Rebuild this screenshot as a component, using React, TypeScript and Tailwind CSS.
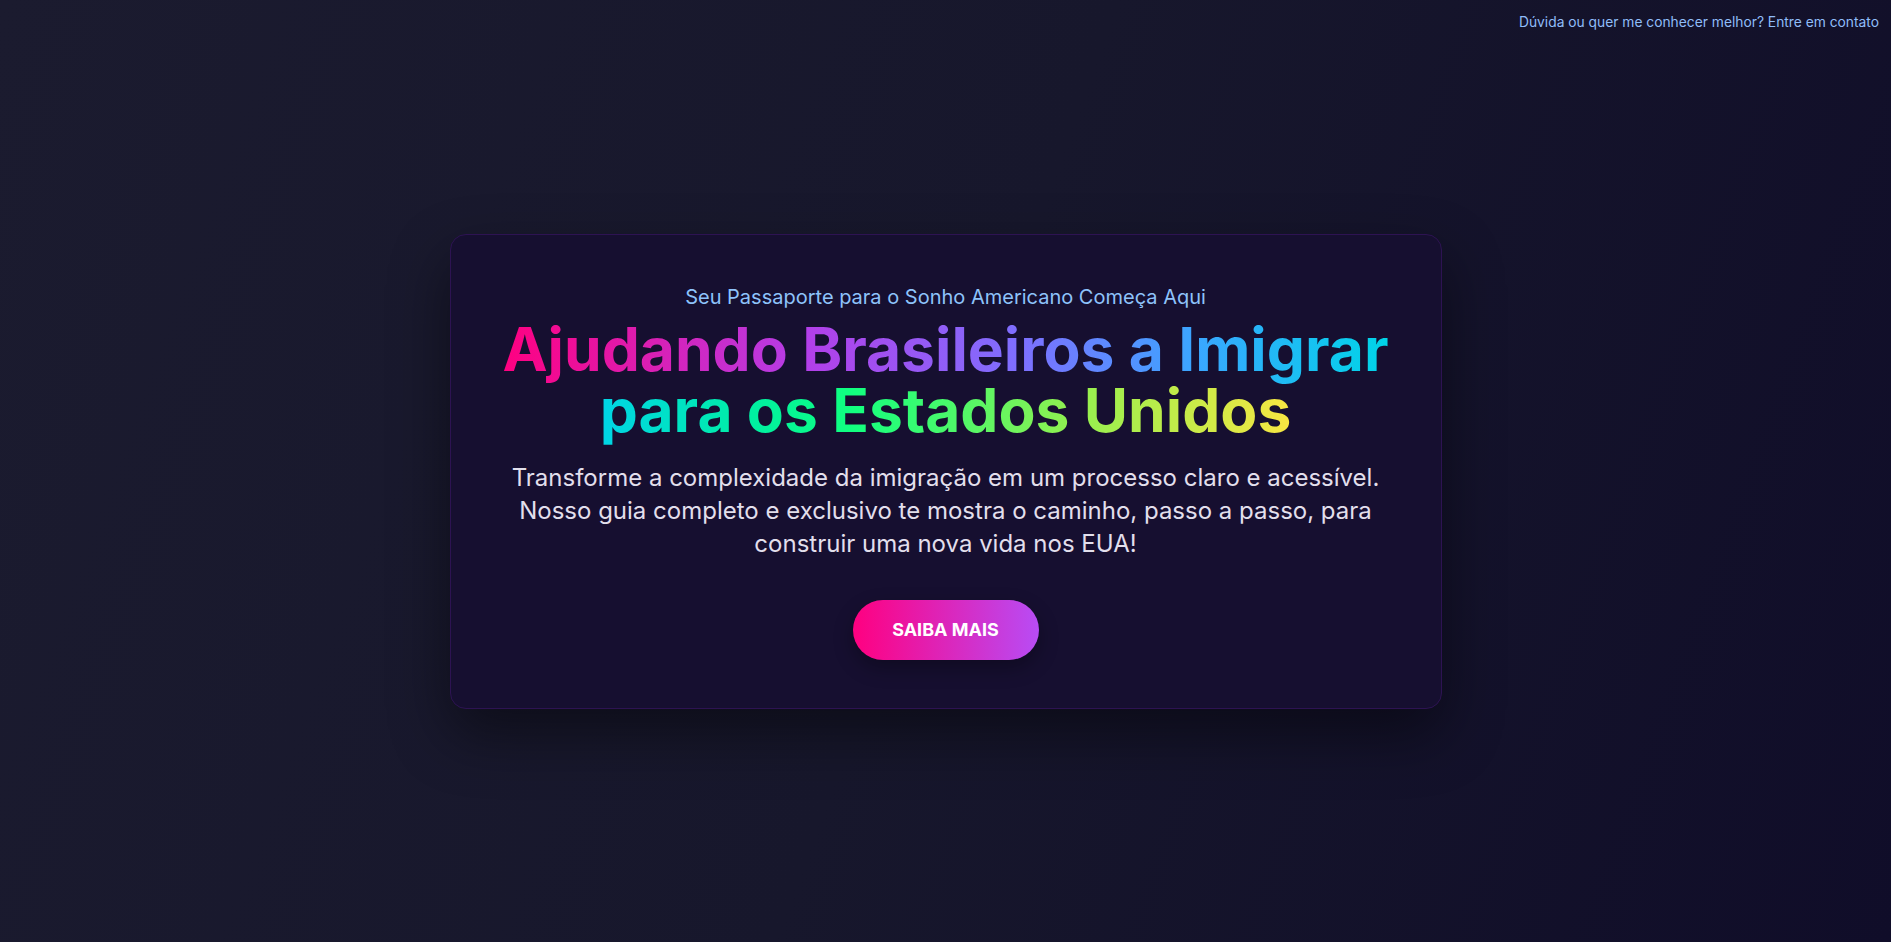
export default function App() {
  return (
    <div className="relative min-h-screen w-full flex items-center justify-center bg-[linear-gradient(110deg,#1b1b2f_0%,#17172c_50%,#100d29_100%)] font-['Inter',sans-serif]">
      <a
        href="#contato"
        className="absolute top-3 right-3 text-[13.8px] text-[#90bdf9] leading-5"
      >
        Dúvida ou quer me conhecer melhor? Entre em contato
      </a>

      <section className="w-[992px] rounded-2xl border border-[#2d1352] bg-[#160f30] p-12 text-center shadow-[0_25px_60px_rgba(0,0,0,0.45)]">
        <p className="text-xl leading-7 text-[#8ec3fb]">
          Seu Passaporte para o Sonho Americano Começa Aqui
        </p>

        <h1 className="mx-auto mt-2 max-w-4xl text-[60.5px] font-bold leading-[61px]">
          <span className="bg-[linear-gradient(90deg,#ff0080_0%,#b43ee8_19%,#7d70ff_33%,#3aa6ff_44%,#00d4e8_56%,#00f0a0_66%,#10ff80_72%,#90f050_86%,#f7e642_100%)] bg-clip-text text-transparent">
            Ajudando Brasileiros a Imigrar para os Estados Unidos
          </span>
        </h1>

        <p className="mx-auto mt-5 max-w-4xl text-2xl leading-[33px] text-[#e2dfec]">
          Transforme a complexidade da imigração em um processo claro e acessível. Nosso guia completo e exclusivo te mostra o caminho, passo a passo, para construir uma nova vida nos EUA!
        </p>

        <button className="mt-10 h-[60px] w-[186px] rounded-full bg-[linear-gradient(90deg,#ff0080,#b84cf5)] text-lg font-bold text-white shadow-[0_8px_20px_rgba(0,0,0,0.3)]">
          SAIBA MAIS
        </button>
      </section>
    </div>
  );
}
